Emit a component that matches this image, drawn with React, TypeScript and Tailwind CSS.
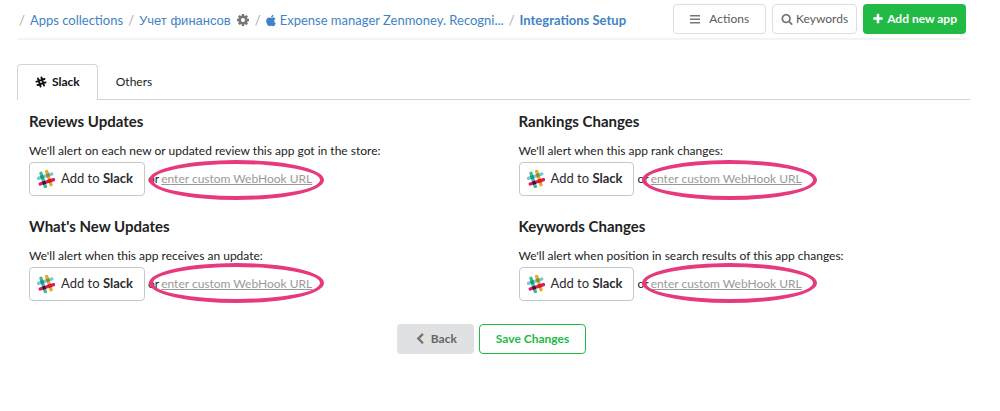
import React from "react";
import { FaApple } from "react-icons/fa";

const COG =
  "M1152 896q0-106-75-181t-181-75-181 75-75 181 75 181 181 75 181-75 75-181zm512-109v222q0 12-8 23t-20 13l-185 28q-19 54-39 91 35 50 107 138 10 12 10 25t-9 23q-27 37-99 108t-94 71q-12 0-26-9l-138-108q-44 23-91 38-16 136-29 186-7 28-36 28h-222q-14 0-24.5-8.5t-11.5-21.5l-28-184q-49-16-90-37l-141 107q-10 9-25 9-14 0-25-11-126-114-165-168-7-10-7-23 0-12 8-23 15-21 51-66.5t54-70.5q-27-50-41-99l-183-27q-13-2-21-12.5t-8-23.5v-222q0-12 8-23t19-13l186-28q14-46 39-92-40-57-107-138-10-12-10-24 0-10 9-23 26-36 98.5-107.5t94.5-71.5q13 0 26 10l138 107q44-23 91-38 16-136 29-186 7-28 36-28h222q14 0 24.5 8.5t11.5 21.5l28 184q49 16 90 37l142-107q9-9 24-9 13 0 25 10 129 119 165 170 7 8 7 22 0 12-8 23-15 21-51 66.5t-54 70.5q26 50 41 98l183 28q13 2 21 12.5t8 23.5z";
const SEARCH =
  "M1216 832q0-185-131.5-316.5t-316.5-131.5-316.5 131.5-131.5 316.5 131.5 316.5 316.5 131.5 316.5-131.5 131.5-316.5zm512 832q0 52-38 90t-90 38q-54 0-90-38l-343-342q-179 124-399 124-143 0-273.5-55.5t-225-150-150-225-55.5-273.5 55.5-273.5 150-225 225-150 273.5-55.5 273.5 55.5 225 150 150 225 55.5 273.5q0 220-124 399l343 343q37 37 37 90z";
const PLUS =
  "M1600 736v192q0 40-28 68t-68 28h-416v416q0 40-28 68t-68 28h-192q-40 0-68-28t-28-68v-416h-416q-40 0-68-28t-28-68v-192q0-40 28-68t68-28h416v-416q0-40 28-68t68-28h192q40 0 68 28t28 68v416h416q40 0 68 28t28 68z";
const CHEVRON_LEFT =
  "M1427 301l-531 531 531 531q19 19 19 45t-19 45l-166 166q-19 19-45 19t-45-19l-742-742q-19-19-19-45t19-45l742-742q19-19 45-19t45 19l166 166q19 19 19 45t-19 45z";

function Glyph({ d, className }: { d: string; className: string }) {
  return (
    <svg viewBox="0 0 1792 1792" fill="currentColor" aria-hidden="true" className={className}>
      <path d={d} />
    </svg>
  );
}

function Bars() {
  return (
    <svg viewBox="0 0 10 10" fill="#767676" aria-hidden="true" className="size-[10px]">
      <rect x="0" y="1" width="10" height="1.5" />
      <rect x="0" y="4.5" width="10" height="1.5" />
      <rect x="0" y="8" width="10" height="1.5" />
    </svg>
  );
}

function HashMark() {
  return (
    <svg viewBox="0 0 24 24" aria-hidden="true" className="size-3" stroke="currentColor" strokeWidth="3.8" strokeLinecap="round">
      <g transform="rotate(-18 12 12)">
        <path d="M8.4 3.5v17M15.6 3.5v17M3.5 8.4h17M3.5 15.6h17" />
      </g>
    </svg>
  );
}

function SlackLogo() {
  return (
    <svg viewBox="0 0 24 24" aria-hidden="true" className="size-[18px]" strokeWidth="4.4" strokeLinecap="round">
      <g transform="rotate(-18 12 12)">
        <path d="M2.6 8h18.8" stroke="#70cadb" />
        <path d="M16 2.6v18.8" stroke="#e9a820" />
        <path d="M8 2.6v18.8" stroke="#3eb991" />
        <path d="M2.6 16h18.8" stroke="#e01765" />
        <g strokeLinecap="butt">
          <path d="M5.8 8h4.4" stroke="#1a937d" />
          <path d="M13.8 8h4.4" stroke="#7b8b4c" />
          <path d="M5.8 16h4.4" stroke="#361238" />
          <path d="M13.8 16h4.4" stroke="#cc2027" />
        </g>
      </g>
    </svg>
  );
}

function Slash() {
  return <span className="text-[#a9a9a9]">/</span>;
}

type Alert = { title: string; text: string; ring: string };

const ALERTS: Alert[] = [
  {
    title: "Reviews Updates",
    text: "We'll alert on each new or updated review this app got in the store:",
    ring: "-left-3 -right-3 -top-[11px] h-10",
  },
  {
    title: "Rankings Changes",
    text: "We'll alert when this app rank changes:",
    ring: "-left-[9px] -right-[15px] -top-[11px] h-10",
  },
  {
    title: "What's New Updates",
    text: "We'll alert when this app receives an update:",
    ring: "-left-3 -right-3 -top-[13px] h-10",
  },
  {
    title: "Keywords Changes",
    text: "We'll alert when position in search results of this app changes:",
    ring: "-left-[9px] -right-[15px] -top-[13px] h-10",
  },
];

function AlertSection({ title, text, ring }: Alert) {
  return (
    <section>
      <h2 className="text-[15px] leading-5 font-bold">{title}</h2>
      <p className="mt-3 leading-4">{text}</p>
      <div className="mt-[3px] flex items-center">
        <button type="button" className="flex h-[34px] items-center gap-[6px] rounded border border-[#c6c7c8] bg-white pr-[11px] pl-[7px] text-[13px] text-[#2c2d30]">
          <SlackLogo />
          <span>
            Add to <b>Slack</b>
          </span>
        </button>
        <span className="ml-[3px] leading-4">or</span>
        <span className="relative ml-[2px] leading-4">
          <a href="#webhook" className="text-[#999] underline">
            enter custom WebHook URL
          </a>
          <span className={`pointer-events-none absolute rounded-[50%] border-4 border-[#e7397d] ${ring}`} />
        </span>
      </div>
    </section>
  );
}

export default function App() {
  return (
    <div className="min-h-screen bg-white pb-8 font-['Lato','Liberation_Sans',sans-serif] text-[12px] text-[#222]">
      <header className="mr-[34px] ml-[17px] flex items-center justify-between border-b-2 border-[#f4f4f4] pt-1 pb-1">
        <nav aria-label="Breadcrumb" className="flex items-center gap-[5px] pt-0.5 pl-0.5 text-[13px] leading-5 whitespace-nowrap text-[#4183c4]">
          <Slash />
          <a href="#collections">Apps collections</a>
          <Slash />
          <a href="#finance">
            <span className="font-['Liberation_Sans',sans-serif]">Учет финансов</span>
          </a>
          <button type="button" aria-label="Settings" className="text-[#767676]">
            <Glyph d={COG} className="size-[14px]" />
          </button>
          <Slash />
          <a href="#app" className="flex items-center gap-1">
            <FaApple className="h-[13px] w-[10px]" aria-hidden="true" />
            Expense manager Zenmoney. Recogni...
          </a>
          <Slash />
          <a href="#setup" className="font-bold">
            Integrations Setup
          </a>
        </nav>
        <div className="flex gap-[6px]">
          <button type="button" className="flex h-[30px] items-center gap-[9px] rounded border border-[#dededf] px-4 text-[#5a5a5a]">
            <Bars />
            Actions
          </button>
          <button type="button" className="flex h-[30px] items-center gap-[3px] rounded border border-[#dededf] px-2 text-[#5a5a5a]">
            <Glyph d={SEARCH} className="size-3 text-[#767676]" />
            Keywords
          </button>
          <button type="button" className="flex h-[30px] items-center gap-[3px] rounded bg-[#21ba45] px-[9px] font-bold text-white">
            <Glyph d={PLUS} className="size-3" />
            Add new app
          </button>
        </div>
      </header>

      <div role="tablist" className="mt-6 mr-[30px] ml-[17px] flex border-b border-[#d4d4d5]">
        <button
          type="button"
          role="tab"
          aria-selected="true"
          className="-mb-px flex h-9 items-center gap-[5px] rounded-t border border-b-0 border-[#d4d4d5] bg-white px-[17px] pb-0.5 font-bold text-[#111]"
        >
          <HashMark />
          Slack
        </button>
        <button type="button" role="tab" aria-selected="false" className="h-[35px] px-[18px]">
          Others
        </button>
      </div>

      <main className="pt-[11px] pl-[29px]">
        <div className="grid grid-cols-2 gap-x-2 gap-y-5">
          {ALERTS.map((alert) => (
            <AlertSection key={alert.title} {...alert} />
          ))}
        </div>
      </main>

      <footer className="mt-[23px] mr-[17px] flex justify-center gap-[5px]">
        <button type="button" className="flex h-[30px] items-center gap-[5px] rounded bg-[#e0e1e2] px-[17px] font-bold text-[#666]">
          <Glyph d={CHEVRON_LEFT} className="size-3 text-[#767676]" />
          Back
        </button>
        <button type="button" className="h-[30px] rounded border border-[#21ba45] px-4 font-bold text-[#21ba45]">
          Save Changes
        </button>
      </footer>
    </div>
  );
}
